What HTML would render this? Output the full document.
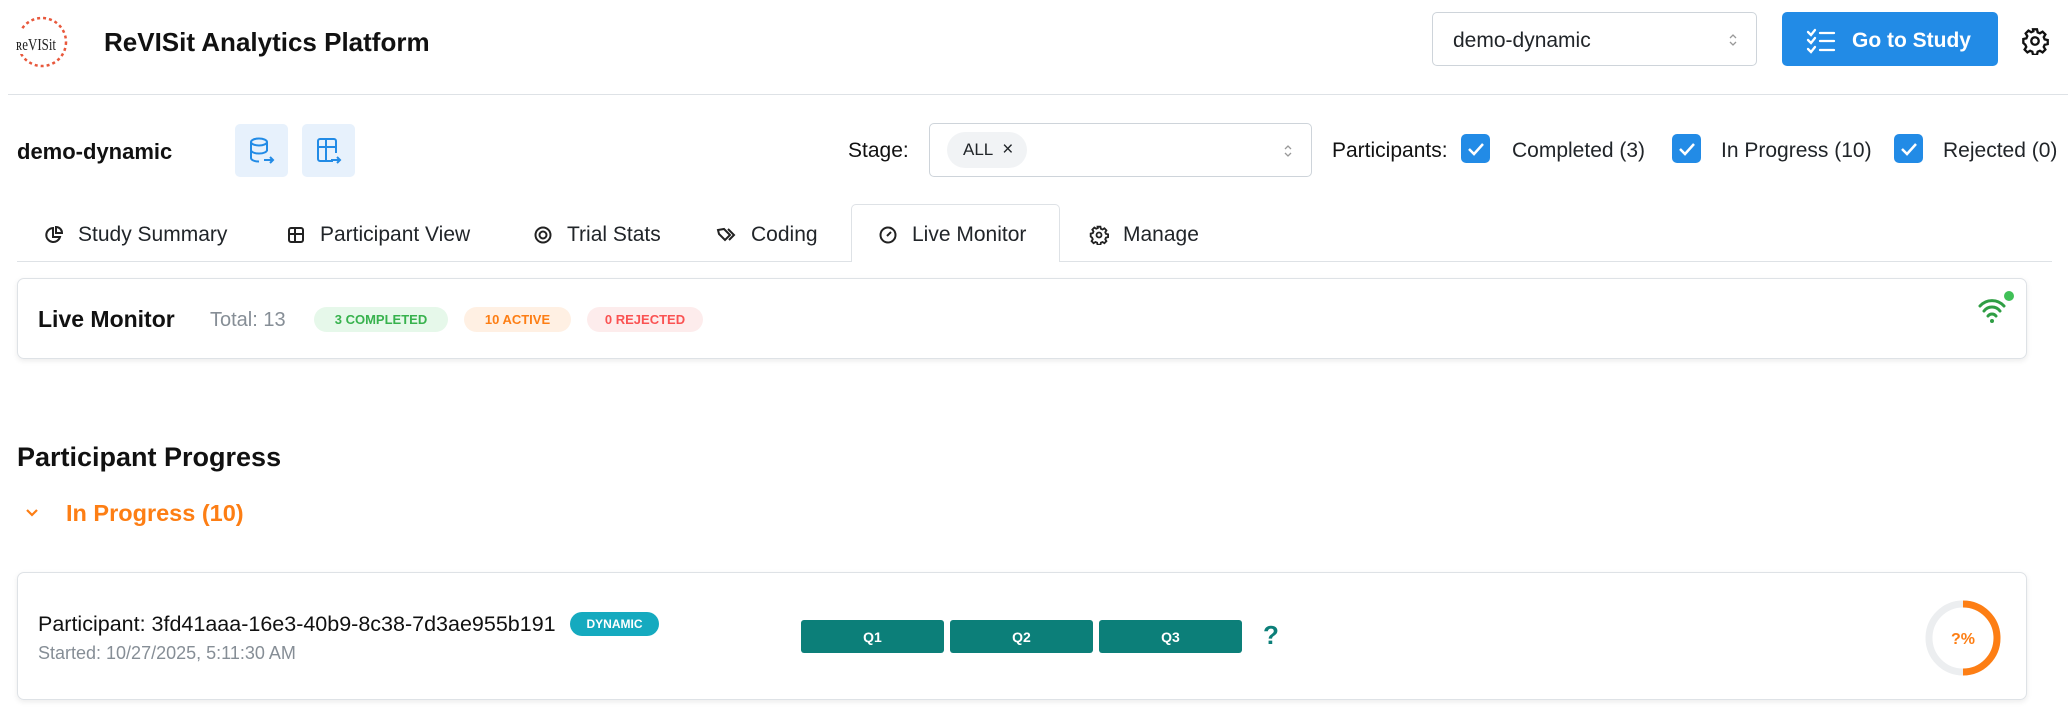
<!DOCTYPE html>
<html><head><meta charset="utf-8"><style>
*{box-sizing:border-box;margin:0;padding:0}
body{width:2068px;height:721px;overflow:hidden;background:#fff;font-family:"Liberation Sans",sans-serif;color:#212529;position:relative}
.a{position:absolute}
.vc{display:flex;align-items:center}
.tab{position:absolute;top:206px;height:57px;display:flex;align-items:center;font-size:21px;color:#212529}
.tab svg{margin-right:14px}
.cb{position:absolute;top:134px;width:29px;height:29px;background:#228be6;border-radius:5px;display:flex;align-items:center;justify-content:center}
.badge{position:absolute;top:307px;height:25px;border-radius:13px;font-size:13px;font-weight:bold;display:flex;align-items:center;justify-content:center}
.q{position:absolute;top:620px;height:33px;width:143px;background:#0c7f79;color:#fff;border-radius:3px;font-size:14px;font-weight:bold;display:flex;align-items:center;justify-content:center}
.lb{position:absolute;top:139px;font-size:21px}
</style></head><body>
<!-- header -->
<svg class="a" style="left:14px;top:14px" width="54" height="56" viewBox="0 0 54 56"><circle cx="28" cy="28" r="24" fill="none" stroke="#e8583c" stroke-width="2.5" stroke-dasharray="3 3"/><rect x="0" y="16" width="44" height="24" fill="#fff"/><text x="2" y="36" font-family="Liberation Serif" font-size="17" fill="#222" textLength="40" lengthAdjust="spacingAndGlyphs">ʀeVISit</text></svg>
<div class="a" style="left:104px;top:27px;font-size:26px;font-weight:bold;color:#111">ReVISit Analytics Platform</div>
<div class="a vc" style="left:1432px;top:12px;width:325px;height:54px;border:1px solid #ced4da;border-radius:5px;padding-left:20px;font-size:21px;padding-top:4px">demo-dynamic
<svg class="a" style="right:18px;top:19px" width="10" height="16" viewBox="0 0 10 16"><path d="M2 6l3-3 3 3M2 10l3 3 3-3" fill="none" stroke="#999" stroke-width="1.3"/></svg></div>
<div class="a vc" style="left:1782px;top:12px;width:216px;height:54px;background:#228be6;border-radius:5px;color:#fff;font-size:21px;font-weight:bold;padding-left:24px;padding-top:4px">
<svg width="30" height="26" viewBox="0 0 30 26" style="margin-right:16px"><path d="M2 4l3 3 4-5M2 12l3 3 4-5M2 21l3 3 4-5M14 5h14M14 13h14M14 22h14" fill="none" stroke="#fff" stroke-width="2.3" stroke-linecap="round"/></svg>Go to Study</div>
<svg class="a" style="left:2021px;top:27px" width="28" height="28" viewBox="0 0 24 24"><path d="M10.3 2h3.4l.6 2.6 1.9.8 2.3-1.4 2.4 2.4-1.4 2.3.8 1.9 2.6.6v3.4l-2.6.6-.8 1.9 1.4 2.3-2.4 2.4-2.3-1.4-1.9.8-.6 2.6h-3.4l-.6-2.6-1.9-.8-2.3 1.4-2.4-2.4 1.4-2.3-.8-1.9L2 13.7v-3.4l2.6-.6.8-1.9L4 5.5l2.4-2.4 2.3 1.4 1.9-.8z" fill="none" stroke="#111" stroke-width="2"/><circle cx="12" cy="12" r="3.2" fill="none" stroke="#111" stroke-width="2"/></svg>
<div class="a" style="left:8px;top:94px;width:2060px;height:1px;background:#dee2e6"></div>
<!-- row 2 -->
<div class="a" style="left:17px;top:139px;font-size:22px;font-weight:bold;color:#111">demo-dynamic</div>
<div class="a" style="left:235px;top:124px;width:53px;height:53px;background:#e7f1fc;border-radius:5px"><svg style="margin:12px 0 0 13px" width="28" height="30" viewBox="0 0 28 30" fill="none" stroke="#228be6" stroke-width="2"><ellipse cx="11" cy="6" rx="8" ry="3.5"/><path d="M3 6v16c0 2 3.5 3.5 8 3.5M19 6v9M3 14c0 2 3.5 3.5 8 3.5s8-1.5 8-3.5M16 24h9M22 21l3 3-3 3"/></svg></div>
<div class="a" style="left:302px;top:124px;width:53px;height:53px;background:#e7f1fc;border-radius:5px"><svg style="margin:12px 0 0 13px" width="28" height="30" viewBox="0 0 28 30" fill="none" stroke="#228be6" stroke-width="2"><path d="M18 25H5a2 2 0 01-2-2V5a2 2 0 012-2h14a2 2 0 012 2v12M3 11h18M11 3v22M16 24h9M22 21l3 3-3 3"/></svg></div>
<div class="lb" style="left:848px;color:#111">Stage:</div>
<div class="a" style="left:929px;top:123px;width:383px;height:54px;border:1px solid #ced4da;border-radius:5px">
<div class="a vc" style="left:17px;top:8px;width:80px;height:36px;background:#f1f3f5;border-radius:18px;font-size:17px;padding-left:16px">ALL <span style="margin-left:9px;font-size:19px">×</span></div>
<svg class="a" style="right:18px;top:19px" width="10" height="16" viewBox="0 0 10 16"><path d="M2 6l3-3 3 3M2 10l3 3 3-3" fill="none" stroke="#999" stroke-width="1.3"/></svg></div>
<div class="lb" style="left:1332px;color:#111">Participants:</div>
<div class="cb" style="left:1461px"><svg width="18" height="14" viewBox="0 0 18 14"><path d="M2 7l5 5 9-10" fill="none" stroke="#fff" stroke-width="2.5"/></svg></div>
<div class="lb" style="left:1512px">Completed (3)</div>
<div class="cb" style="left:1672px"><svg width="18" height="14" viewBox="0 0 18 14"><path d="M2 7l5 5 9-10" fill="none" stroke="#fff" stroke-width="2.5"/></svg></div>
<div class="lb" style="left:1721px">In Progress (10)</div>
<div class="cb" style="left:1894px"><svg width="18" height="14" viewBox="0 0 18 14"><path d="M2 7l5 5 9-10" fill="none" stroke="#fff" stroke-width="2.5"/></svg></div>
<div class="lb" style="left:1943px">Rejected (0)</div>
<!-- tabs -->
<div class="a" style="left:17px;top:261px;width:2035px;height:1px;background:#dee2e6"></div>
<div class="a" style="left:851px;top:204px;width:209px;height:58px;border:1px solid #dee2e6;border-bottom:none;border-radius:5px 5px 0 0;background:#fff"></div>
<div class="tab" style="left:44px"><svg width="20" height="20" viewBox="0 0 20 20" fill="none" stroke="#222" stroke-width="2"><path d="M9 3a7 7 0 107 9H9z"/><path d="M12 2v6h6a6 6 0 00-6-6z"/></svg>Study Summary</div>
<div class="tab" style="left:286px"><svg width="20" height="20" viewBox="0 0 20 20" fill="none" stroke="#222" stroke-width="2"><rect x="3" y="3" width="14" height="14" rx="2"/><path d="M3 9h14M9 3v14"/></svg>Participant View</div>
<div class="tab" style="left:533px"><svg width="20" height="20" viewBox="0 0 20 20" fill="none" stroke="#222" stroke-width="2"><circle cx="10" cy="10" r="7.5"/><circle cx="10" cy="10" r="3.5"/></svg>Trial Stats</div>
<div class="tab" style="left:715px"><svg width="22" height="20" viewBox="0 0 22 20" fill="none" stroke="#222" stroke-width="2"><path d="M3 5l6-1 6 6-5 5-6-6z"/><path d="M13 4l6 6-5 5"/></svg>Coding</div>
<div class="tab" style="left:878px"><svg width="20" height="20" viewBox="0 0 20 20" fill="none" stroke="#222" stroke-width="2"><circle cx="10" cy="10" r="7.5"/><path d="M9 11l4-4"/></svg>Live Monitor</div>
<div class="tab" style="left:1089px"><svg width="20" height="20" viewBox="0 0 24 24" fill="none" stroke="#222" stroke-width="2.2"><path d="M10.3 2h3.4l.6 2.6 1.9.8 2.3-1.4 2.4 2.4-1.4 2.3.8 1.9 2.6.6v3.4l-2.6.6-.8 1.9 1.4 2.3-2.4 2.4-2.3-1.4-1.9.8-.6 2.6h-3.4l-.6-2.6-1.9-.8-2.3 1.4-2.4-2.4 1.4-2.3-.8-1.9L2 13.7v-3.4l2.6-.6.8-1.9L4 5.5l2.4-2.4 2.3 1.4 1.9-.8z"/><circle cx="12" cy="12" r="3"/></svg>Manage</div>
<!-- live monitor card -->
<div class="a" style="left:17px;top:278px;width:2010px;height:81px;border:1px solid #dee2e6;border-radius:7px;box-shadow:0 2px 6px rgba(0,0,0,.08)"></div>
<div class="a" style="left:38px;top:306px;font-size:23px;font-weight:bold;color:#111">Live Monitor</div>
<div class="a" style="left:210px;top:309px;font-size:20px;color:#868e96">Total: 13</div>
<div class="badge" style="left:314px;width:134px;background:#e6f8ea;color:#37b24d">3 COMPLETED</div>
<div class="badge" style="left:464px;width:107px;background:#fff0e3;color:#fd7e14">10 ACTIVE</div>
<div class="badge" style="left:587px;width:116px;background:#fdecec;color:#fa5252">0 REJECTED</div>
<svg class="a" style="left:1976px;top:288px" width="40" height="40" viewBox="0 0 40 40"><path d="M4 18a16 16 0 0124 0M8 23a10 10 0 0116 0M12 28a5 5 0 018 0" fill="none" stroke="#2f9e44" stroke-width="3" stroke-linecap="round"/><circle cx="16" cy="33" r="2" fill="#2f9e44"/><circle cx="33" cy="8" r="5" fill="#40c057"/></svg>
<!-- progress -->
<div class="a" style="left:17px;top:442px;font-size:27px;font-weight:bold;color:#111">Participant Progress</div>
<svg class="a" style="left:24px;top:507px" width="16" height="12" viewBox="0 0 16 12"><path d="M3 3l5 5 5-5" fill="none" stroke="#fd7e14" stroke-width="2.2"/></svg>
<div class="a" style="left:66px;top:500px;font-size:23.5px;font-weight:bold;color:#fd7e14">In Progress (10)</div>
<div class="a" style="left:17px;top:572px;width:2010px;height:128px;border:1px solid #dee2e6;border-radius:7px;box-shadow:0 2px 6px rgba(0,0,0,.08)"></div>
<div class="a" style="left:38px;top:612px;font-size:21.5px;color:#111">Participant: 3fd41aaa-16e3-40b9-8c38-7d3ae955b191</div>
<div class="a vc" style="left:570px;top:612px;width:89px;height:24px;background:#15aabf;border-radius:12px;color:#fff;font-size:12px;font-weight:bold;justify-content:center">DYNAMIC</div>
<div class="a" style="left:38px;top:643px;font-size:18px;color:#868e96">Started: 10/27/2025, 5:11:30 AM</div>
<div class="q" style="left:801px">Q1</div>
<div class="q" style="left:950px">Q2</div>
<div class="q" style="left:1099px">Q3</div>
<div class="a" style="left:1263px;top:620px;font-size:26px;font-weight:bold;color:#0c7f79">?</div>
<svg class="a" style="left:1922px;top:597px" width="82" height="82" viewBox="0 0 82 82"><circle cx="41" cy="41" r="34" fill="none" stroke="#eceef0" stroke-width="7"/><path d="M41 7a34 34 0 010 68" fill="none" stroke="#fd7e14" stroke-width="7"/><text x="41" y="47" text-anchor="middle" font-family="Liberation Sans" font-size="16" font-weight="bold" fill="#fd7e14">?%</text></svg>
</body></html>
